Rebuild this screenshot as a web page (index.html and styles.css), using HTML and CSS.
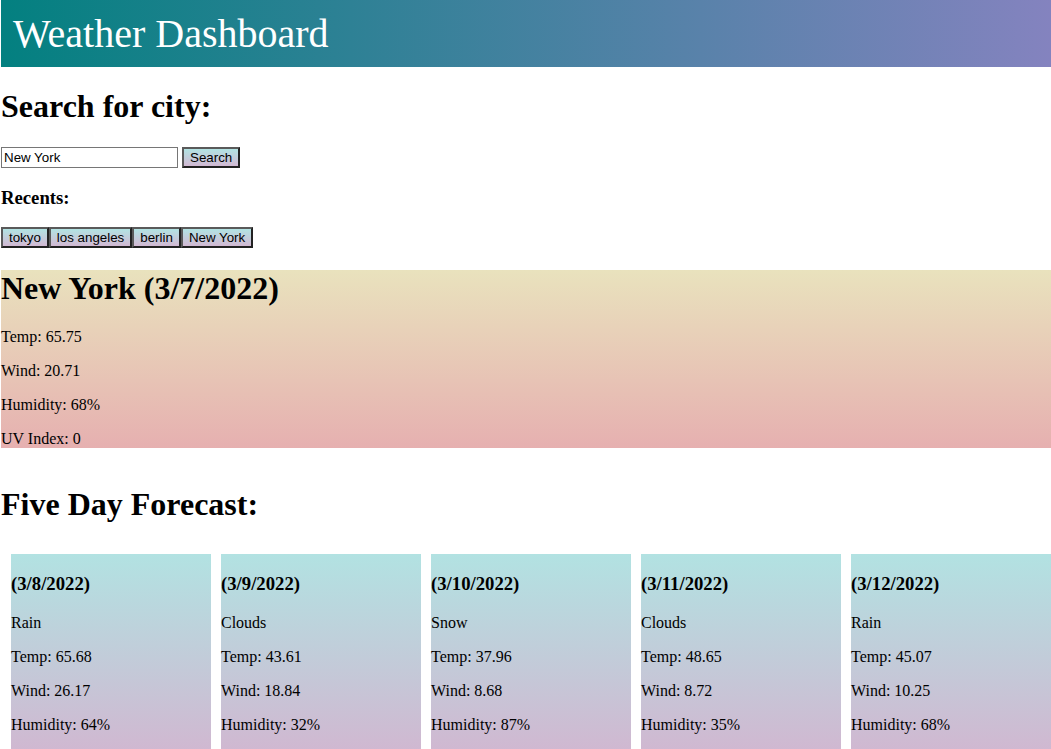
FILE: index.html
```html
<!DOCTYPE html>
<html lang="en">
<head>
<meta charset="utf-8">
<title>Weather Dashboard</title>
<link rel="stylesheet" href="styles.css">
</head>
<body>
<header class="site-header">
  <div class="site-title">Weather Dashboard</div>
</header>
<main>
  <h1 class="section-title">Search for city:</h1>
  <div class="search">
    <input class="search-input" type="text" value="New York">
    <button class="btn" type="button">Search</button>
  </div>
  <h3 class="recents-title">Recents:</h3>
  <div class="recents">
    <button class="btn" type="button">tokyo</button><button class="btn" type="button">los angeles</button><button class="btn" type="button">berlin</button><button class="btn" type="button">New York</button>
  </div>
  <section class="current">
    <h1 class="section-title">New York (3/7/2022)</h1>
    <p>Temp: 65.75</p>
    <p>Wind: 20.71</p>
    <p>Humidity: 68%</p>
    <p>UV Index: 0</p>
  </section>
  <section class="forecast">
    <h1 class="section-title">Five Day Forecast:</h1>
    <div class="cards">
      <div class="card">
        <h3>(3/8/2022)</h3>
        <p>Rain</p>
        <p>Temp: 65.68</p>
        <p>Wind: 26.17</p>
        <p>Humidity: 64%</p>
      </div>
      <div class="card">
        <h3>(3/9/2022)</h3>
        <p>Clouds</p>
        <p>Temp: 43.61</p>
        <p>Wind: 18.84</p>
        <p>Humidity: 32%</p>
      </div>
      <div class="card">
        <h3>(3/10/2022)</h3>
        <p>Snow</p>
        <p>Temp: 37.96</p>
        <p>Wind: 8.68</p>
        <p>Humidity: 87%</p>
      </div>
      <div class="card">
        <h3>(3/11/2022)</h3>
        <p>Clouds</p>
        <p>Temp: 48.65</p>
        <p>Wind: 8.72</p>
        <p>Humidity: 35%</p>
      </div>
      <div class="card">
        <h3>(3/12/2022)</h3>
        <p>Rain</p>
        <p>Temp: 45.07</p>
        <p>Wind: 10.25</p>
        <p>Humidity: 68%</p>
      </div>
    </div>
  </section>
</main>
</body>
</html>
```

FILE: styles.css
```css
html, body {
  overflow: hidden;
}

body {
  margin: 0;
  padding-left: 1px;
  font-family: "Liberation Serif", "Times New Roman", serif;
  font-size: 16px;
  color: #000;
  background: #fff;
}

.site-header {
  background: linear-gradient(to right, #038080, #8483bf);
  padding: 11px 12px 10px;
}

.site-title {
  font-size: 40px;
  line-height: 46px;
  color: #fff;
}

.section-title {
  font-size: 32px;
  font-weight: bold;
  margin: 21.44px 0;
}

.search {
  display: flex;
  align-items: flex-start;
  gap: 4px;
}

.search-input {
  box-sizing: border-box;
  width: 177px;
  height: 21px;
  margin: 0;
  padding: 1px 2px;
  border: 1px solid #767676;
  font-family: "Liberation Sans", Arial, sans-serif;
  font-size: 13.33px;
  color: #000;
}

.btn {
  margin: 0;
  padding: 1px 6px;
  height: 21px;
  border: 2px solid;
  border-color: #5a5a5a #222 #222 #5a5a5a;
  background: linear-gradient(#b2e3e3, #d2b9d3);
  font-family: "Liberation Sans", Arial, sans-serif;
  font-size: 13.33px;
  color: #000;
  line-height: 15px;
}

.recents-title {
  font-size: 18.72px;
  margin: 18.72px 0;
}

.recents {
  display: flex;
}

.current {
  background: linear-gradient(#e9e2bd, #e6b0b0);
}

.current p,
.card p {
  margin: 16px 0;
}

.forecast {
  display: flow-root;
}

.cards {
  display: flex;
  gap: 10px;
  padding: 10px 0 0 10px;
}

.card {
  flex: 0 0 200px;
  width: 200px;
  background: linear-gradient(#b2e2e2, #d0b8d1);
}

.card h3 {
  font-size: 18.72px;
  margin: 18.72px 0;
}
```
